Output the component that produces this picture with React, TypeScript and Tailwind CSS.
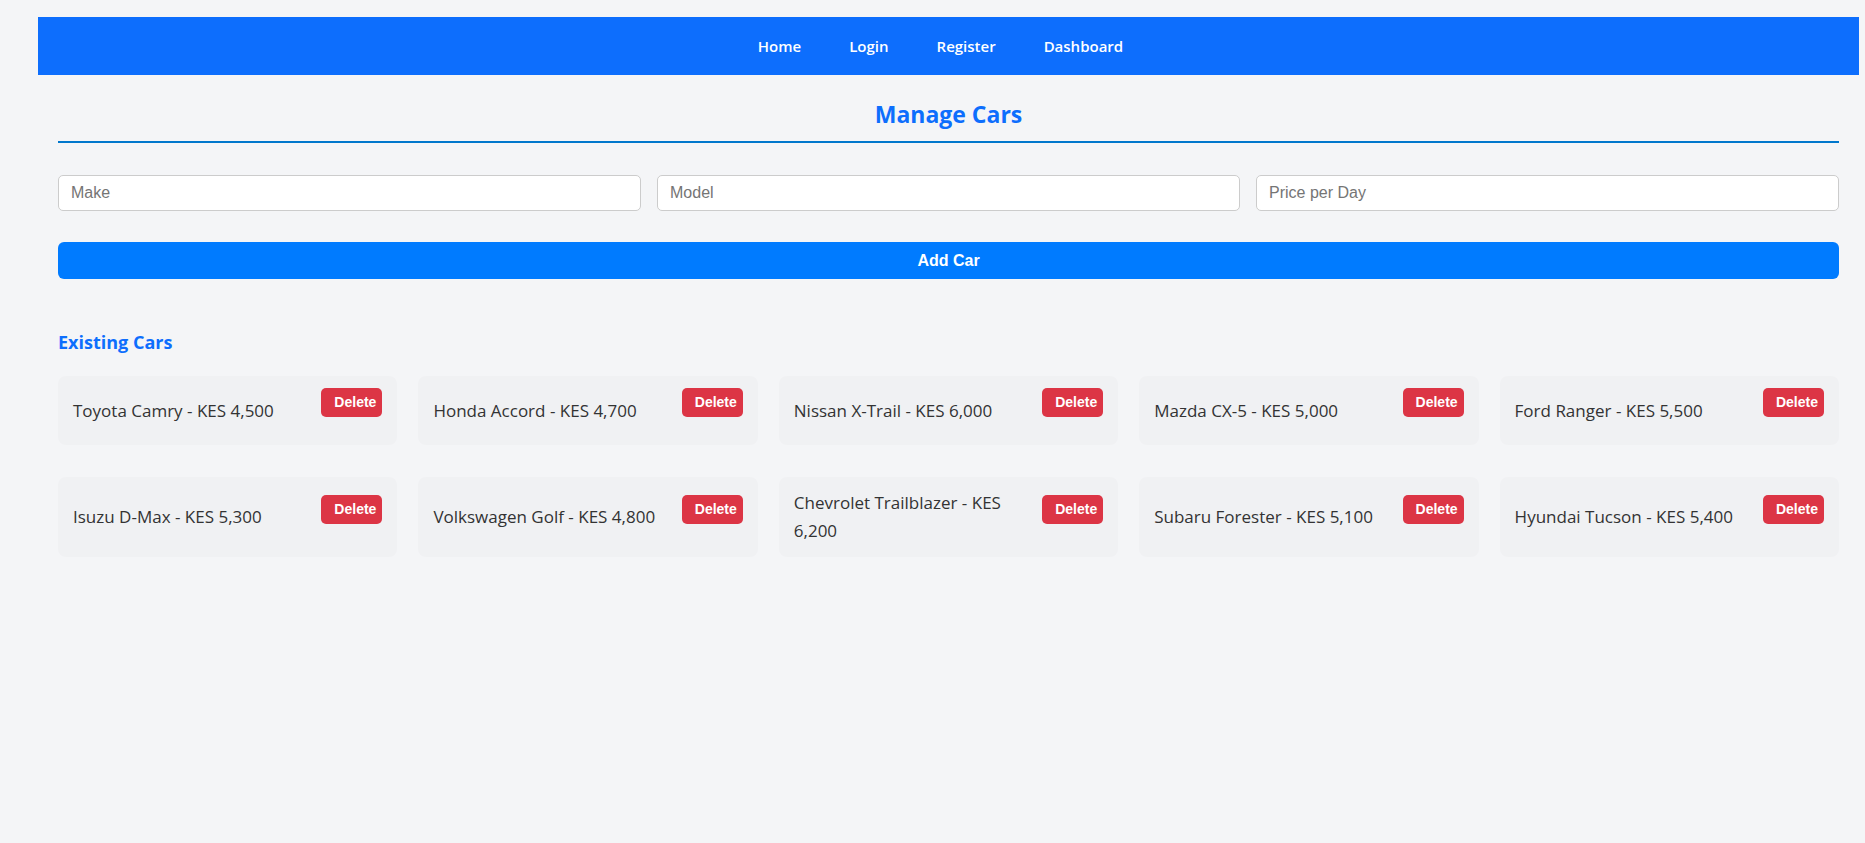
import React, { useState } from 'react';

type Car = { id: number; make: string; model: string; price: number };

const initialCars: Car[] = [
  { id: 1, make: 'Toyota', model: 'Camry', price: 4500 },
  { id: 2, make: 'Honda', model: 'Accord', price: 4700 },
  { id: 3, make: 'Nissan', model: 'X-Trail', price: 6000 },
  { id: 4, make: 'Mazda', model: 'CX-5', price: 5000 },
  { id: 5, make: 'Ford', model: 'Ranger', price: 5500 },
  { id: 6, make: 'Isuzu', model: 'D-Max', price: 5300 },
  { id: 7, make: 'Volkswagen', model: 'Golf', price: 4800 },
  { id: 8, make: 'Chevrolet', model: 'Trailblazer', price: 6200 },
  { id: 9, make: 'Subaru', model: 'Forester', price: 5100 },
  { id: 10, make: 'Hyundai', model: 'Tucson', price: 5400 },
];

const navLinks = ['Home', 'Login', 'Register', 'Dashboard'];

export default function App() {
  const [cars, setCars] = useState<Car[]>(initialCars);
  const [make, setMake] = useState('');
  const [model, setModel] = useState('');
  const [price, setPrice] = useState('');

  const addCar = () => {
    if (!make || !model || !price) return;
    setCars([...cars, { id: Date.now(), make, model, price: Number(price) }]);
    setMake('');
    setModel('');
    setPrice('');
  };

  const deleteCar = (id: number) => setCars(cars.filter((c) => c.id !== id));

  return (
    <div className="min-h-screen bg-[#f4f5f7] pt-[17px] pl-[38px] pr-[6px] font-['Open_Sans','Segoe_UI',sans-serif]">
      <nav className="h-[58px] bg-[#0d6efd] flex items-center justify-center gap-[48px] pr-[16px]">
        {navLinks.map((link) => (
          <a key={link} href="#" className="text-white font-semibold text-[15px]">
            {link}
          </a>
        ))}
      </nav>

      <div className="px-5">
        <h2 className="mt-[22px] pb-[10px] border-b-2 border-[#0077cc] text-center text-[23px] leading-[34px] font-bold text-[#0d6efd]">
          Manage Cars
        </h2>

        <div className="mt-[32px] grid grid-cols-3 gap-4">
          <input
            value={make}
            onChange={(e) => setMake(e.target.value)}
            placeholder="Make"
            className="h-[36px] bg-white border border-[#cccccc] rounded-[5px] px-3 text-[16px] font-['Liberation_Sans',Arial,sans-serif] placeholder:text-[#757575] outline-none"
          />
          <input
            value={model}
            onChange={(e) => setModel(e.target.value)}
            placeholder="Model"
            className="h-[36px] bg-white border border-[#cccccc] rounded-[5px] px-3 text-[16px] font-['Liberation_Sans',Arial,sans-serif] placeholder:text-[#757575] outline-none"
          />
          <input
            value={price}
            onChange={(e) => setPrice(e.target.value)}
            placeholder="Price per Day"
            className="h-[36px] bg-white border border-[#cccccc] rounded-[5px] px-3 text-[16px] font-['Liberation_Sans',Arial,sans-serif] placeholder:text-[#757575] outline-none"
          />
        </div>

        <button
          onClick={addCar}
          className="mt-[31px] w-full h-[37px] bg-[#007bff] text-white rounded-[6px] font-bold text-[16px] font-['Liberation_Sans',Arial,sans-serif]"
        >
          Add Car
        </button>

        <h3 className="mt-[50px] text-[18px] leading-[26px] font-bold text-[#0d6efd]">Existing Cars</h3>

        <div className="mt-[21px] grid grid-cols-5 gap-x-[21px] gap-y-[32px]">
          {cars.map((car) => (
            <div
              key={car.id}
              className="flex items-center justify-between gap-3 bg-[#f0f1f3] rounded-lg px-[15px] py-3"
            >
              <span className="text-[17px] leading-[28px] text-[#333333]">
                {car.make} {car.model} - KES {car.price.toLocaleString('en-US')}
              </span>
              <button
                onClick={() => deleteCar(car.id)}
                className="shrink-0 mb-4 h-[29px] pl-[13px] pr-[6px] bg-[#dc3545] text-white rounded-[5px] font-bold text-[14px] font-['Liberation_Sans',Arial,sans-serif]"
              >
                Delete
              </button>
            </div>
          ))}
        </div>
      </div>
    </div>
  );
}
